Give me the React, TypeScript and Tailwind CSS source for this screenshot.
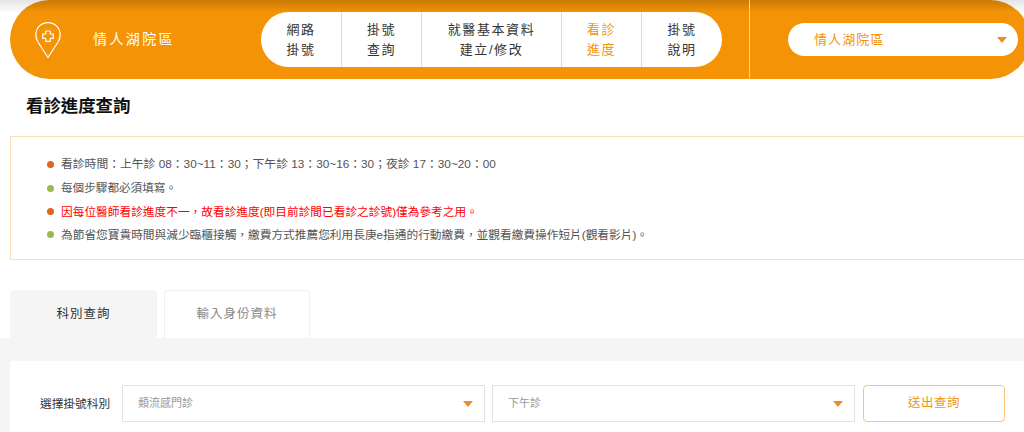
const cjk = "font-['Liberation_Sans','Noto_Sans_CJK_TC',sans-serif]"

const navItems = [
  { lines: ["網路", "掛號"], width: "w-[81px]" },
  { lines: ["掛號", "查詢"], width: "w-[80px]" },
  { lines: ["就醫基本資料", "建立/修改"], width: "w-[140px]" },
  { lines: ["看診", "進度"], width: "w-[80px]", active: true },
  { lines: ["掛號", "說明"], width: "w-[80px]" },
]

function Caret() {
  return <span className="h-0 w-0 border-x-[5.5px] border-t-[6px] border-x-transparent border-t-[#f08a2c]" />
}

function PinIcon() {
  return (
    <svg width="28" height="38" viewBox="0 0 28 38" fill="none" stroke="#fff" strokeWidth="1.2">
      <path d="M14 36.5 L3.6 20.5 C0.6 15 1.6 9 5 5.4 C9.8 0.4 18.2 0.4 23 5.4 C26.4 9 27.4 15 24.4 20.5 Z" strokeLinejoin="round" />
      <path d="M11.8 10 h4.4 v3 h3 v4.4 h-3 v3 h-4.4 v-3 h-3 v-4.4 h3 Z" strokeLinejoin="round" />
    </svg>
  )
}

function Header() {
  return (
    <div className="h-[79px] shrink-0 pl-[10px] bg-[linear-gradient(#e4e4e4_0px,#ffffff_13px)]">
      <div className="w-[1020px] h-[79px] flex rounded-[40px] bg-[linear-gradient(#c97a06_0px,#f39305_12px)]">
        <div className="w-[251px] flex items-center pl-[24px]">
          <PinIcon />
          <span className="ml-[31px] text-[14px] tracking-[2.4px] text-white">情人湖院區</span>
        </div>
        <div className="w-[488px] flex items-center">
          <nav className="flex h-[55px] w-[461px] rounded-[28px] bg-white overflow-hidden divide-x-[1.5px] divide-[#fbd6a0]">
            {navItems.map((item) => (
              <div
                key={item.lines[0] + item.lines[1]}
                className={`${item.width} flex flex-col items-center justify-center text-[13px] leading-[19.5px] tracking-[1.6px] ${item.active ? "text-[#f39305]" : "text-[#333333]"}`}
              >
                {item.lines.map((line) => (
                  <span key={line}>{line}</span>
                ))}
              </div>
            ))}
          </nav>
        </div>
        <div className="flex-1 flex items-center border-l-[1.5px] border-[#fbcf94] pl-[38px]">
          <div className="flex h-[33px] w-[230px] items-center justify-between rounded-[17px] bg-white pl-[26px] pr-[11px]">
            <span className="text-[13px] tracking-[1.1px] text-[#f39305]">情人湖院區</span>
            <Caret />
          </div>
        </div>
      </div>
    </div>
  )
}

function Notice() {
  const rows = [
    { dot: "bg-[#e2641b]", text: "看診時間：上午診 08：30~11：30；下午診 13：30~16：30；夜診 17：30~20：00", cls: "text-[#555555] text-[11.8px]" },
    { dot: "bg-[#9aba4e]", text: "每個步驟都必須填寫。", cls: "text-[#555555] text-[11.6px]" },
    { dot: "bg-[#e2641b]", text: "因每位醫師看診進度不一，故看診進度(即目前診間已看診之診號)僅為參考之用。", cls: "text-[#ff0000] text-[11.7px]" },
    { dot: "bg-[#9aba4e]", text: "為節省您寶貴時間與減少臨櫃接觸，繳費方式推薦您利用長庚e指通的行動繳費，並觀看繳費操作短片(觀看影片)。", cls: "text-[#555555] text-[11.7px]" },
  ]
  return (
    <div className="ml-[10px] w-[1030px] h-[124px] shrink-0 border border-[#f8e0b4] pl-[36px] pt-[16px]">
      {rows.map((row) => (
        <div key={row.text} className="flex h-[23.4px] items-center">
          <span className={`h-[7px] w-[7px] rounded-full ${row.dot}`} />
          <span className={`ml-[7px] whitespace-nowrap ${row.cls}`}>{row.text}</span>
        </div>
      ))}
    </div>
  )
}

function SelectBox({ label }: { label: string }) {
  return (
    <div className="flex h-[37px] w-[363px] items-center justify-between border border-[#e2e2e2] bg-white pl-[15px] pr-[11px]">
      <span className="text-[11px] text-[#999999]">{label}</span>
      <Caret />
    </div>
  )
}

export default function App() {
  return (
    <div className={`h-[432px] w-[1024px] overflow-hidden bg-white flex flex-col ${cjk}`}>
      <Header />
      <h1 className="ml-[26px] mt-[15px] h-[24px] text-[17.4px] leading-[24px] font-bold text-[#111111]">看診進度查詢</h1>
      <div className="mt-[18px]">
        <Notice />
      </div>
      <div className="ml-[10px] mt-[30px] flex gap-[7px]">
        <div className="flex h-[48px] w-[147px] items-center justify-center rounded-t-[4px] bg-[#f5f5f5] text-[12.5px] tracking-[1px] text-[#333333]">科別查詢</div>
        <div className="flex h-[48px] w-[146px] items-center justify-center rounded-t-[4px] border border-b-0 border-[#f0f0f0] bg-white text-[12.5px] tracking-[1px] text-[#888888]">輸入身份資料</div>
      </div>
      <div className="flex-1 bg-[#f5f5f5] pl-[10px] pt-[23px]">
        <div className="flex h-[80px] items-start rounded-tl-[3px] bg-white pt-[24px]">
          <span className="ml-[30px] w-[82px] h-[37px] flex items-center text-[11.7px] text-[#333333]">選擇掛號科別</span>
          <div className="flex gap-[7px]">
            <SelectBox label="類流感門診" />
            <SelectBox label="下午診" />
          </div>
          <button className="ml-[8px] h-[37px] w-[142px] rounded-[4px] border border-[#fcc47a] bg-white text-[12.5px] tracking-[0.5px] text-[#f39305]">送出查詢</button>
        </div>
      </div>
    </div>
  )
}
